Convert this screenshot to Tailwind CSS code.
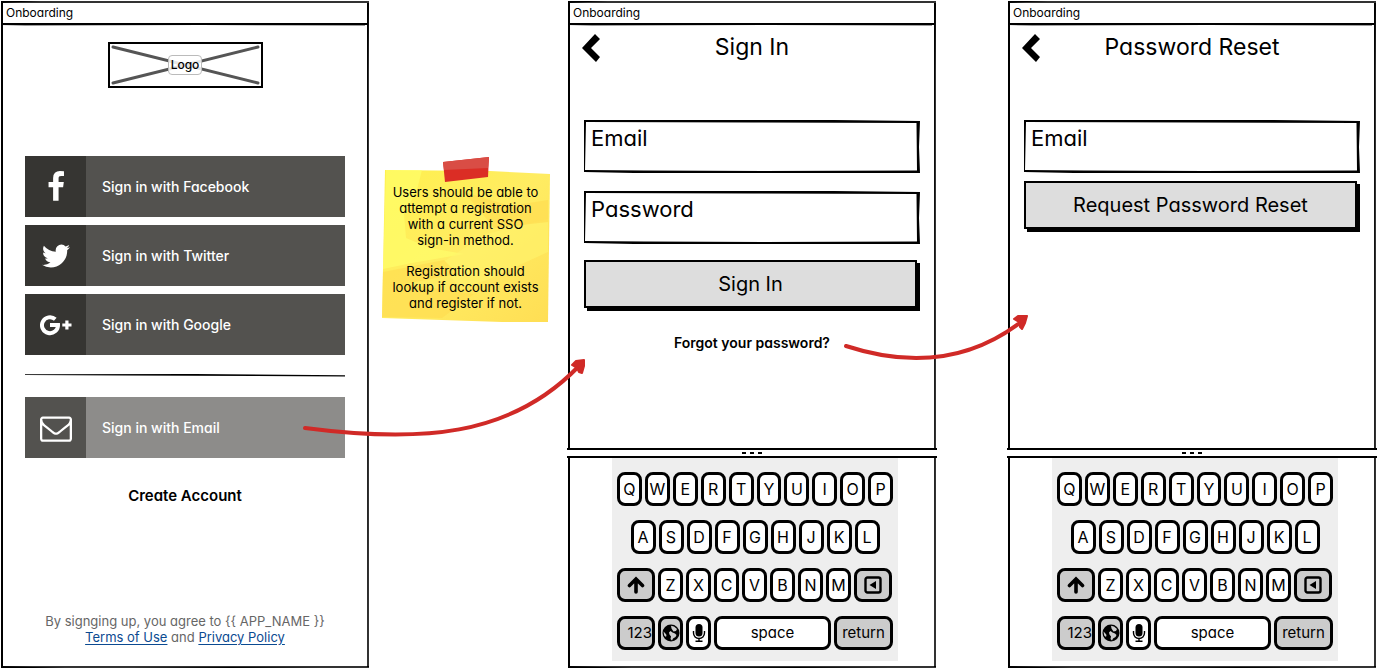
<!DOCTYPE html>
<html lang="en">
<head>
<meta charset="utf-8">
<meta name="viewport" content="width=device-width, initial-scale=1">
<title>Onboarding wireframes</title>
<script src="https://cdn.jsdelivr.net/npm/@tailwindcss/browser@4"></script>
</head>
<body class="bg-white text-black font-[Inter,Lato,sans-serif] [font-feature-settings:'cv11']">

<svg class="hidden" aria-hidden="true">
  <symbol id="frame" viewBox="0 0 368 668" preserveAspectRatio="none">
    <path fill="#333" d="M40 0L150 -1L368 0V2H0zM0 24L24 24.500L200 24L364 24.500V23.500L130 22zM0 22L-1 200L0 330zM0 400L-1 520L0 667zM367 0L369 140L368 330L369 480L368 667H366zM0 666L80 668.500L230 667L368 668.500V666z"/>
  </symbol>
  <symbol id="field" viewBox="0 0 336 53" preserveAspectRatio="none">
    <path d="M-1 0L70 -1L170 0L250 0L336 1L335 27L336 53L290 53L180 54L50 53L-1 52L0 26zM2 2L1 50L60 50.500L180 51L333 50.500L332.500 3L170 2.500z" fill-rule="evenodd"/>
  </symbol>
  <symbol id="chevron" viewBox="0 0 18 28">
    <path d="M0 14L13 0L18 5L9 14L18 23L14 28z"/>
  </symbol>
</svg>

<div class="relative min-h-screen flex items-stretch pt-px pb-px pl-px pr-0.5">

  <!-- Sign-in choices -->
  <section class="relative flex-1 min-w-0 border-2 border-black flex flex-col">
    <svg class="absolute -inset-0.5 w-[calc(100%+4px)] h-[calc(100%+4px)] overflow-visible pointer-events-none" aria-hidden="true"><use href="#frame"/></svg>
    <div class="relative h-[22px] border-b-2 border-black px-[3px] text-xs leading-5">Onboarding</div>
    <div class="flex-1 flex flex-col px-[22px] pt-[17px] pb-[21px]">
      <div class="relative self-center w-[155px] h-[46px] border-2 border-black flex items-center justify-center">
        <svg class="absolute inset-0 w-full h-full" viewBox="0 0 151 42" preserveAspectRatio="none" aria-hidden="true"><path d="M3 3L148 39M148 3L3 39" stroke="#555" stroke-width="3" stroke-linecap="round"/></svg>
        <span class="relative rounded border border-[#bbb] bg-white/85 px-0.5 text-xs leading-[18px] font-medium">Logo</span>
      </div>
      <div class="mt-[68px] flex flex-col gap-2">
        <button class="h-[61px] bg-[#53524f] text-white flex items-center text-left text-sm font-medium">
          <span class="w-[61px] self-stretch bg-[#363532] flex items-center justify-center">
            <svg class="w-8 h-8" viewBox="0 0 1792 1792" fill="#fff" aria-hidden="true"><path d="M1343 12v264h-157q-86 0-116 36t-30 108v189h293l-39 296h-254v759h-306v-759h-255v-296h255v-218q0-186 104-288.500t277-102.500q147 0 228 12z"/></svg>
          </span>
          <span class="pl-4">Sign in with Facebook</span>
        </button>
        <button class="h-[61px] bg-[#53524f] text-white flex items-center text-left text-sm font-medium">
          <span class="w-[61px] self-stretch bg-[#363532] flex items-center justify-center">
            <svg class="w-8 h-8" viewBox="0 0 1792 1792" fill="#fff" aria-hidden="true"><path d="M1684 408q-67 98-162 167 1 14 1 42 0 130-38 259.500t-115.500 248.500-184.500 210.500-258 146-323 54.500q-271 0-496-145 35 4 78 4 225 0 401-138-105-2-188-64.500t-114-159.500q33 5 61 5 43 0 85-11-112-23-185.500-111.500t-73.500-205.500v-4q68 38 146 41-66-44-105-115t-39-154q0-88 44-163 121 149 294.500 238.500t371.500 99.500q-8-38-8-74 0-134 94.500-228.500t228.500-94.500q140 0 236 102 109-21 205-78-37 115-142 178 93-10 186-50z"/></svg>
          </span>
          <span class="pl-4">Sign in with Twitter</span>
        </button>
        <button class="h-[61px] bg-[#53524f] text-white flex items-center text-left text-sm font-medium">
          <span class="w-[61px] self-stretch bg-[#363532] flex items-center justify-center">
            <svg class="w-8 h-8" viewBox="0 0 32 32" fill="none" stroke="#fff" aria-hidden="true"><path stroke-width="4" d="M15.300 10.200A8 8 0 1 0 18 15.900H10"/><path stroke-width="3.200" d="M22.300 16H31.500M26.900 11.400V20.600"/></svg>
          </span>
          <span class="pl-4">Sign in with Google</span>
        </button>
      </div>
      <svg class="mt-[18px] w-full h-1 shrink-0" viewBox="0 0 320 4" preserveAspectRatio="none" role="separator"><path d="M0 1.200L170 1L320 2.200V3.500L230 3L100 2.600L0 2z"/></svg>
      <button class="mt-5 h-[61px] bg-[#8d8c8a] text-white flex items-center text-left text-sm font-medium">
        <span class="w-[61px] self-stretch bg-[#53524f] flex items-center justify-center">
          <svg class="w-8 h-8" viewBox="0 0 1792 1792" fill="#fff" aria-hidden="true"><path d="M1664 1504v-768q-32 36-69 66-268 206-426 338-51 43-83 67t-86.500 48.500-102.500 24.500h-2q-48 0-102.500-24.500t-86.500-48.500-83-67q-158-132-426-338-37-30-69-66v768q0 13 9.500 22.500t22.500 9.500h1472q13 0 22.500-9.500t9.500-22.500zm0-1051v-24.500l-.5-13-3-12.500-5.500-9-9-7.500-14-2.500h-1472q-13 0-22.500 9.500t-9.500 22.500q0 168 147 284 193 152 401 317 6 5 35 29.500t46 37.500 44.500 31.500 50.500 27.500 43 9h2q20 0 43-9t50.500-27.500 44.500-31.500 46-37.500 35-29.500q208-165 401-317 54-43 100.500-115.500t46.500-131.500zm128-37v1088q0 66-47 113t-113 47h-1472q-66 0-113-47t-47-113v-1088q0-66 47-113t113-47h1472q66 0 113 47t47 113z"/></svg>
        </span>
        <span class="pl-4">Sign in with Email</span>
      </button>
      <button class="mt-[26px] self-center text-[15px] leading-6 font-semibold">Create Account</button>
      <p class="mt-auto text-center text-[13px] leading-4 text-[#666]">By signging up, you agree to {{ APP_NAME }}<br><a href="#" class="text-[#0b4a91] underline underline-offset-2">Terms of Use</a> and <a href="#" class="text-[#0b4a91] underline underline-offset-2">Privacy Policy</a></p>
    </div>
  </section>

  <!-- Sticky note between the first two screens -->
  <aside class="w-[199px] shrink-0 pt-[155px] pr-1.5">
    <div class="relative mx-auto w-[168px] h-[168px] pt-7 text-center text-[13px] leading-4">
      <svg class="absolute inset-0 w-full h-full" viewBox="0 0 168 168" aria-hidden="true">
        <defs><linearGradient id="paper" x1="0" y1="0" x2="1" y2="1"><stop offset="0" stop-color="#fff04e"/><stop offset=".5" stop-color="#ffec62"/><stop offset="1" stop-color="#ffde54"/></linearGradient></defs>
        <path fill="url(#paper)" d="M3 14L108 15L168 18L166 166L120 166L0 162z"/>
        <path fill="#ffff6c" d="M4 14H40L35 34L22 58L24 82L48 92L82 98L30 107L1 113z" opacity=".65"/>
        <path fill="#fff36c" d="M58 108L104 78L166 63V96L105 124L78 132z" opacity=".6"/>
        <path fill="#ffdd51" d="M82 36L128 50L166 44V66L112 72zM1 116L62 104L76 118L22 128L92 138L60 162L0 161z" opacity=".7"/>
        <path fill="#db2d25" d="M61 6L107 1L106 21L63 26z"/>
        <path fill="#d94d45" d="M61 6L107 1L106 12L62 14z"/>
      </svg>
      <p class="relative">Users should be able to<br>attempt a registration<br>with a current SSO<br>sign-in method.</p>
      <p class="relative mt-[15px]">Registration should<br>lookup if account exists<br>and register if not.</p>
    </div>
  </aside>

  <!-- Sign in -->
  <section class="relative flex-1 min-w-0 border-2 border-black flex flex-col">
    <svg class="absolute -inset-0.5 w-[calc(100%+4px)] h-[calc(100%+4px)] overflow-visible pointer-events-none" aria-hidden="true"><use href="#frame"/></svg>
    <div class="relative h-[22px] border-b-2 border-black px-[3px] text-xs leading-5">Onboarding</div>
    <div class="flex-1 flex flex-col px-3.5">
      <header class="h-[46px] grid grid-cols-[18px_1fr_18px] items-center">
        <button aria-label="Back" class="-ml-0.5"><svg class="w-[18px] h-7"><use href="#chevron"/></svg></button>
        <h1 class="pb-0.5 text-center text-[23px] leading-7">Sign In</h1>
      </header>
      <form class="mt-[49px] flex flex-col">
        <div class="relative h-[53px]">
          <svg class="absolute inset-0 w-full h-full overflow-visible" aria-hidden="true"><use href="#field"/></svg>
          <input type="email" aria-label="Email" placeholder="Email" class="relative w-full h-full pl-[7px] pb-[18px] bg-transparent text-[22px] placeholder:text-black placeholder:opacity-100">
        </div>
        <div class="relative mt-[18px] h-[53px]">
          <svg class="absolute inset-0 w-full h-full overflow-visible" aria-hidden="true"><use href="#field"/></svg>
          <input type="password" aria-label="Password" placeholder="Password" class="relative w-full h-full pl-[7px] pb-[18px] bg-transparent text-[22px] placeholder:text-black placeholder:opacity-100">
        </div>
        <button type="button" class="mt-4 mr-[3px] h-12 border-2 border-black bg-[#ddd] shadow-[3px_3px_0_#000] text-xl">Sign In</button>
      </form>
      <a href="#" class="mt-[25px] self-center text-sm font-semibold">Forgot your password?</a>
    </div>
    <div data-keyboard></div>
  </section>

  <div class="w-[72px] shrink-0"></div>

  <!-- Password reset -->
  <section class="relative flex-1 min-w-0 border-2 border-black flex flex-col">
    <svg class="absolute -inset-0.5 w-[calc(100%+4px)] h-[calc(100%+4px)] overflow-visible pointer-events-none" aria-hidden="true"><use href="#frame"/></svg>
    <div class="relative h-[22px] border-b-2 border-black px-[3px] text-xs leading-5">Onboarding</div>
    <div class="flex-1 flex flex-col px-3.5">
      <header class="h-[46px] grid grid-cols-[18px_1fr_18px] items-center">
        <button aria-label="Back" class="-ml-0.5"><svg class="w-[18px] h-7"><use href="#chevron"/></svg></button>
        <h1 class="pb-0.5 text-center text-[23px] leading-7">Password Reset</h1>
      </header>
      <form class="mt-[49px] flex flex-col">
        <div class="relative h-[53px]">
          <svg class="absolute inset-0 w-full h-full overflow-visible" aria-hidden="true"><use href="#field"/></svg>
          <input type="email" aria-label="Email" placeholder="Email" class="relative w-full h-full pl-[7px] pb-[18px] bg-transparent text-[22px] placeholder:text-black placeholder:opacity-100">
        </div>
        <button type="button" class="mt-2 mr-[3px] h-12 border-2 border-black bg-[#ddd] shadow-[3px_3px_0_#000] text-xl">Request Password Reset</button>
      </form>
    </div>
    <div data-keyboard></div>
  </section>

  <!-- Flow arrows drawn over the screens -->
  <svg class="absolute inset-0 w-full h-full pointer-events-none" viewBox="0 0 1378 669" preserveAspectRatio="none" fill="none" stroke="#d02a27" stroke-width="4" stroke-linecap="round" stroke-linejoin="round" aria-hidden="true">
    <path d="M305 428C420 443 510 437 578 367"/>
    <path fill="#d02a27" stroke-width="2" d="M584 360L576 361L572 365L577 368L579 372L582 373L584 366z"/>
    <path d="M846 346C910 367 970 361 1021 322"/>
    <path fill="#d02a27" stroke-width="2" d="M1027 316L1018 316L1014 319L1019 322L1020 327L1022 329L1025 323z"/>
  </svg>
</div>

<template id="keyboard">
  <div class="-mx-[3px] relative bg-white border-y-2 border-black h-[10px] flex items-start justify-center gap-1 pt-0.5">
    <i class="w-1 h-0.5 bg-black"></i><i class="w-1 h-0.5 bg-black"></i><i class="w-1 h-0.5 bg-black"></i>
  </div>
  <div class="flex justify-center pl-1.5 mb-[5px]">
  <div class="w-[286px] bg-[#eee] px-[5px] pt-3.5 pb-[11px] flex flex-col gap-3.5 text-base">
    <div class="flex justify-center gap-[3px]" data-row="QWERTYUIOP"></div>
    <div class="flex justify-center gap-[3px]" data-row="ASDFGHJKL"></div>
    <div class="flex gap-[3px]" data-row="ZXCVBNM">
      <button aria-label="Shift" class="w-[38px] h-[34px] rounded-lg border-3 border-black bg-[#ccc] flex items-center justify-center"><svg class="w-[18px] h-[18px]" viewBox="0 0 18 18" fill="none" stroke="#000" stroke-width="3.600" stroke-linecap="round" aria-hidden="true"><path d="M9 16V4M2.500 9.500L9 3L15.500 9.500"/></svg></button>
      <button aria-label="Delete" data-last class="w-[38px] h-[34px] rounded-lg border-3 border-black bg-[#ccc] flex items-center justify-center"><svg class="w-[18px] h-[18px]" viewBox="0 0 18 18" aria-hidden="true"><rect x="1.500" y="1.500" width="15" height="15" rx="2" fill="none" stroke="#000" stroke-width="2.400"/><path d="M12 5V13L5.500 9z"/></svg></button>
    </div>
    <div class="flex gap-[3px]">
      <button class="w-[38px] h-[34px] rounded-lg border-3 border-black bg-[#ccc] text-right text-[15px]">123</button>
      <button aria-label="Change language" class="w-[25px] h-[34px] rounded-lg border-3 border-black bg-[#ccc] flex items-center justify-center"><svg class="w-[18px] h-[18px] shrink-0" viewBox="0 0 18 18" aria-hidden="true"><circle cx="9" cy="9" r="8.500"/><path fill="#ccc" d="M9 1.800L12 2.500L15 5L14 7L11.500 7.500L10.500 6L9.500 4.500zM8.500 7L10.500 8.500L13 9.500L14.500 11L13.500 13L11 14.500L10 16.500L8.500 15L9 12.500L7.500 10.500L7 8.500zM1.500 7.500L3 9L4.500 11L4 13L2.200 11.500z"/></svg></button>
      <button aria-label="Dictate" class="w-[25px] h-[34px] rounded-lg border-3 border-black bg-white flex items-center justify-center"><svg class="w-[14px] h-[18px] shrink-0" viewBox="0 0 14 18" aria-hidden="true"><rect x="3.500" width="7" height="12.500" rx="3.500"/><path d="M1.500 7V9A5.500 5.500 0 0 0 12.500 9V7M7 14.500V17.200M3.500 17.200H10.500" fill="none" stroke="#000" stroke-width="1.400"/></svg></button>
      <button class="flex-1 h-[34px] rounded-lg border-3 border-black bg-white text-[15px]">space</button>
      <button class="w-[59px] h-[34px] rounded-lg border-3 border-black bg-[#ccc] text-[15px]">return</button>
    </div>
  </div>
  </div>
</template>

<script>
  const template = document.getElementById('keyboard');
  document.querySelectorAll('[data-keyboard]').forEach(slot => {
    const board = template.content.cloneNode(true);
    board.querySelectorAll('[data-row]').forEach(row => {
      const last = row.querySelector('[data-last]');
      for (const letter of row.dataset.row) {
        const key = document.createElement('button');
        key.className = 'w-[25px] h-[34px] rounded-lg border-3 border-black bg-white text-base leading-none flex items-center justify-center';
        key.textContent = letter;
        row.insertBefore(key, last);
      }
    });
    slot.append(board);
  });
</script>
</body>
</html>
